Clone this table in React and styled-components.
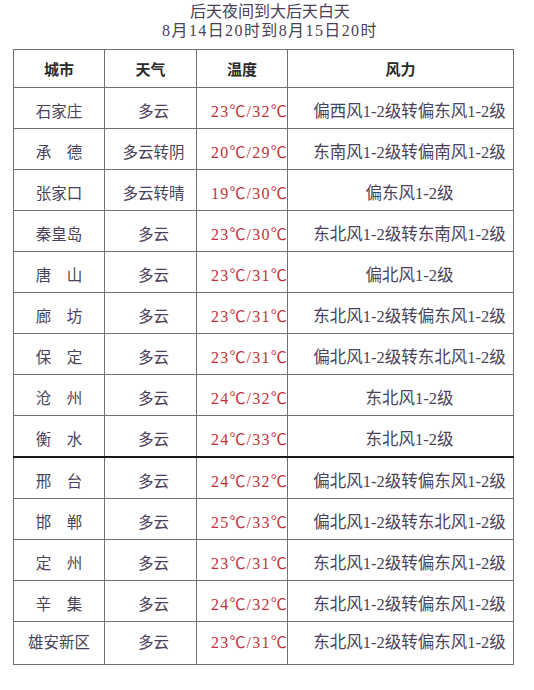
import React from "react";
import styled, { createGlobalStyle } from "styled-components";

const GlobalStyle = createGlobalStyle`
  html, body {
    margin: 0;
    padding: 0;
    background: #ffffff;
  }
  body {
    font-family: "Liberation Serif", "Noto Sans CJK SC", serif;
  }
`;

const Page = styled.div`
  width: 534px;
  height: 690px;
  background: #fff;
  padding-top: 2px;
  box-sizing: border-box;
`;

const Title = styled.div`
  text-align: center;
  color: #4a4258;
  font-size: 16px;
  line-height: 19px;
  padding-left: 6px;
`;

const TitleLine = styled.div`
  letter-spacing: ${(p) => (p.$wide ? "1.4px" : "0")};
`;

const Table = styled.table`
  margin: 9px 0 0 13px;
  width: 500px;
  border-collapse: collapse;
  table-layout: fixed;
  color: #4a4258;
`;

const Th = styled.th`
  height: 37px;
  border: 1px solid #707070;
  font-weight: bold;
  font-size: 15px;
  color: #2a2a2a;
  text-align: center;
  padding: 0;
`;

const Row = styled.tr`
  border-top: ${(p) => (p.$strong ? "2px solid #1a1a1a" : "1px solid #707070")};
`;

const Td = styled.td`
  height: ${(p) => (p.$last ? "38px" : "37px")};
  border-left: 1px solid #707070;
  border-right: 1px solid #707070;
  border-bottom: 1px solid #707070;
  text-align: center;
  font-size: 15.5px;
  padding: ${(p) => (p.$last ? "0 0 4px" : "3px 0 0")};
  padding-left: ${(p) => p.$shift || 0}px;
  white-space: nowrap;
`;

const Temp = styled(Td)`
  color: #c4303a;
  font-size: 16px;
  letter-spacing: 1.2px;
`;

const Wind = styled(Td)`
  font-size: 16.5px;
`;

const rows = [
  ["石家庄", "多云", "23℃/32℃", "偏西风1-2级转偏东风1-2级"],
  ["承　德", "多云转阴", "20℃/29℃", "东南风1-2级转偏南风1-2级"],
  ["张家口", "多云转晴", "19℃/30℃", "偏东风1-2级"],
  ["秦皇岛", "多云", "23℃/30℃", "东北风1-2级转东南风1-2级"],
  ["唐　山", "多云", "23℃/31℃", "偏北风1-2级"],
  ["廊　坊", "多云", "23℃/31℃", "东北风1-2级转偏东风1-2级"],
  ["保　定", "多云", "23℃/31℃", "偏北风1-2级转东北风1-2级"],
  ["沧　州", "多云", "24℃/32℃", "东北风1-2级"],
  ["衡　水", "多云", "24℃/33℃", "东北风1-2级"],
  ["邢　台", "多云", "24℃/32℃", "偏北风1-2级转偏东风1-2级"],
  ["邯　郸", "多云", "25℃/33℃", "偏北风1-2级转东北风1-2级"],
  ["定　州", "多云", "23℃/31℃", "东北风1-2级转偏东风1-2级"],
  ["辛　集", "多云", "24℃/32℃", "东北风1-2级转偏东风1-2级"],
  ["雄安新区", "多云", "23℃/31℃", "东北风1-2级转偏东风1-2级"],
];

const App = () => {
  return (
    <Page>
      <GlobalStyle />
      <Title>
        <TitleLine>后天夜间到大后天白天</TitleLine>
        <TitleLine $wide>8月14日20时到8月15日20时</TitleLine>
      </Title>
      <Table>
        <colgroup>
          <col style={{ width: 91 }} />
          <col style={{ width: 92 }} />
          <col style={{ width: 91 }} />
          <col style={{ width: 226 }} />
        </colgroup>
        <thead>
          <tr>
            <Th>城市</Th>
            <Th>天气</Th>
            <Th>温度</Th>
            <Th>风力</Th>
          </tr>
        </thead>
        <tbody>
          {rows.map((r, i) => {
            const last = i === rows.length - 1;
            return (
              <Row key={r[0]} $strong={i === 9}>
                <Td $last={last}>{r[0]}</Td>
                <Td $last={last} $shift={6}>{r[1]}</Td>
                <Temp $last={last} $shift={14}>{r[2]}</Temp>
                <Wind $last={last} $shift={18}>{r[3]}</Wind>
              </Row>
            );
          })}
        </tbody>
      </Table>
    </Page>
  );
};

export default App;
